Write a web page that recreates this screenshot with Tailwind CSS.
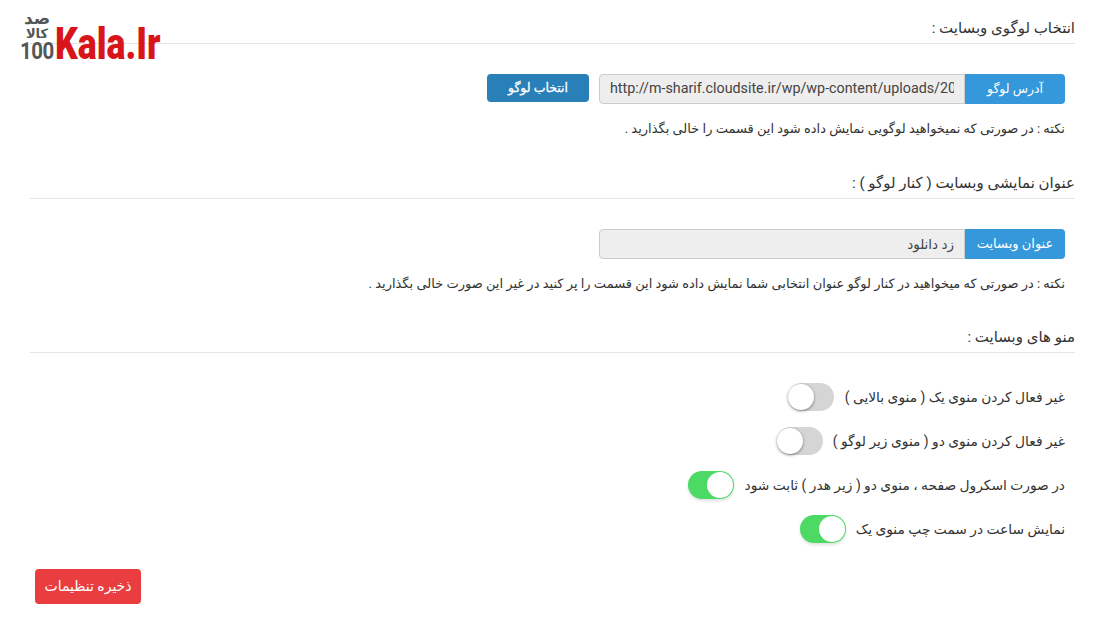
<!DOCTYPE html>
<html lang="fa" dir="rtl">
<head>
    <meta charset="UTF-8">
    <title>تنظیمات</title>
    <script src="https://cdn.jsdelivr.net/npm/@tailwindcss/browser@4"></script>
</head>
<body class="relative bg-white w-[1104px] h-[633px] overflow-hidden font-['Roboto','DejaVu_Sans',sans-serif] text-[13px] text-[#333]">
    <!-- logo sits over the first heading rule -->
    <div dir="ltr" class="absolute left-[19px] top-[10px] w-[142px] h-[52px] flex">
        <div class="w-[36px] flex flex-col items-center text-[#555]">
            <span dir="rtl" class="h-[16px] text-[17px] leading-[16px] font-bold font-['DejaVu_Sans',sans-serif]">صد</span>
            <span dir="rtl" class="h-[16px] text-[13px] leading-[16px] font-bold font-['DejaVu_Sans',sans-serif]">کالا</span>
            <span class="h-[18px] text-[24px] leading-[18px] font-bold scale-x-[0.85] tracking-[-0.5px]">100</span>
        </div>
        <span class="mt-[15px] h-[38px] text-[44px] leading-[38px] font-black text-[#d8161a] scale-x-[0.81] origin-left whitespace-nowrap">Kala.Ir</span>
    </div>

    <main class="w-[1104px] pl-[30px] pr-[29px]">
        <section class="pt-[18px]">
            <h2 class="h-[26px] border-b border-[#e5e5e5] text-[15px] leading-[20px] text-[#333]">انتخاب لوگوی وبسایت :</h2>
            <div class="flex items-start mt-[30px] pr-[10px]">
                <label class="w-[100px] h-[30px] flex items-center justify-center bg-[#3498db] text-white text-[12.5px] rounded-r-[4px]">آدرس لوگو</label>
                <div dir="ltr" class="w-[366px] h-[30px] px-[10px] flex items-center overflow-hidden bg-[#eee] border border-[#ccc] rounded-l-[4px] text-[14.3px] text-[#444] whitespace-nowrap">
                    <span class="w-[344px] overflow-hidden">http://m-sharif.cloudsite.ir/wp/wp-content/uploads/2017</span>
                </div>
                <button class="mr-[10px] w-[102px] h-[28px] bg-[#2980b9] text-white text-[12.5px] [-webkit-text-stroke:0.3px_white] rounded-[4px]">انتخاب لوگو</button>
            </div>
            <p class="mt-[15px] pr-[10px] h-[20px] leading-[20px] text-[13px]">نکته : در صورتی که نمیخواهید لوگویی نمایش داده شود این قسمت را خالی بگذارید .</p>
        </section>

        <section class="mt-[34px]">
            <h2 class="h-[26px] border-b border-[#e5e5e5] text-[15px] leading-[20px] text-[#333]">عنوان نمایشی وبسایت ( کنار لوگو ) :</h2>
            <div class="flex items-center mt-[30px] pr-[10px]">
                <label class="w-[100px] h-[30px] flex items-center justify-center bg-[#3498db] text-white text-[13px] rounded-r-[4px]">عنوان وبسایت</label>
                <div class="w-[366px] h-[30px] px-[10px] flex items-center bg-[#eee] border border-[#ccc] rounded-l-[4px] text-[13.5px] text-[#444]">زد دانلود</div>
            </div>
            <p class="mt-[15px] pr-[10px] h-[20px] leading-[20px] text-[13px]">نکته : در صورتی که میخواهید در کنار لوگو عنوان انتخابی شما نمایش داده شود این قسمت را پر کنید در غیر این صورت خالی بگذارید .</p>
        </section>

        <section class="mt-[33px]">
            <h2 class="h-[26px] border-b border-[#e5e5e5] text-[15px] leading-[20px] text-[#333]">منو های وبسایت :</h2>
            <div class="mt-[30px] pr-[10px] flex flex-col gap-[16px] text-[13.8px]">
                <div class="flex items-center gap-[11px] h-[28px]">
                    <span>غیر فعال کردن منوی یک ( منوی بالایی )</span>
                    <span class="relative w-[46px] h-[28px] rounded-full bg-[#d5d5d5]"><span class="absolute left-0 top-[1px] w-[26px] h-[26px] rounded-full bg-white shadow-[0_1px_3px_rgba(0,0,0,0.45)]"></span></span>
                </div>
                <div class="flex items-center gap-[10px] h-[28px]">
                    <span>غیر فعال کردن منوی دو ( منوی زیر لوگو )</span>
                    <span class="relative w-[46px] h-[28px] rounded-full bg-[#d5d5d5]"><span class="absolute left-0 top-[1px] w-[26px] h-[26px] rounded-full bg-white shadow-[0_1px_3px_rgba(0,0,0,0.45)]"></span></span>
                </div>
                <div class="flex items-center gap-[10px] h-[28px]">
                    <span>در صورت اسکرول صفحه ، منوی دو ( زیر هدر ) ثابت شود</span>
                    <span class="relative w-[46px] h-[28px] rounded-full bg-[#4cd964] shadow-[0_2px_3px_rgba(0,0,0,0.12)]"><span class="absolute right-[1px] top-[1px] w-[26px] h-[26px] rounded-full bg-white"></span></span>
                </div>
                <div class="flex items-center gap-[10px] h-[28px]">
                    <span>نمایش ساعت در سمت چپ منوی یک</span>
                    <span class="relative w-[46px] h-[28px] rounded-full bg-[#4cd964] shadow-[0_2px_3px_rgba(0,0,0,0.12)]"><span class="absolute right-[1px] top-[1px] w-[26px] h-[26px] rounded-full bg-white"></span></span>
                </div>
            </div>
        </section>

        <div class="flex justify-end mt-[26px] pl-[5px]">
            <button class="w-[106px] h-[35px] bg-[#e93d3f] text-white text-[14px] rounded-[4px]">ذخیره تنظیمات</button>
        </div>
    </main>
</body>
</html>
